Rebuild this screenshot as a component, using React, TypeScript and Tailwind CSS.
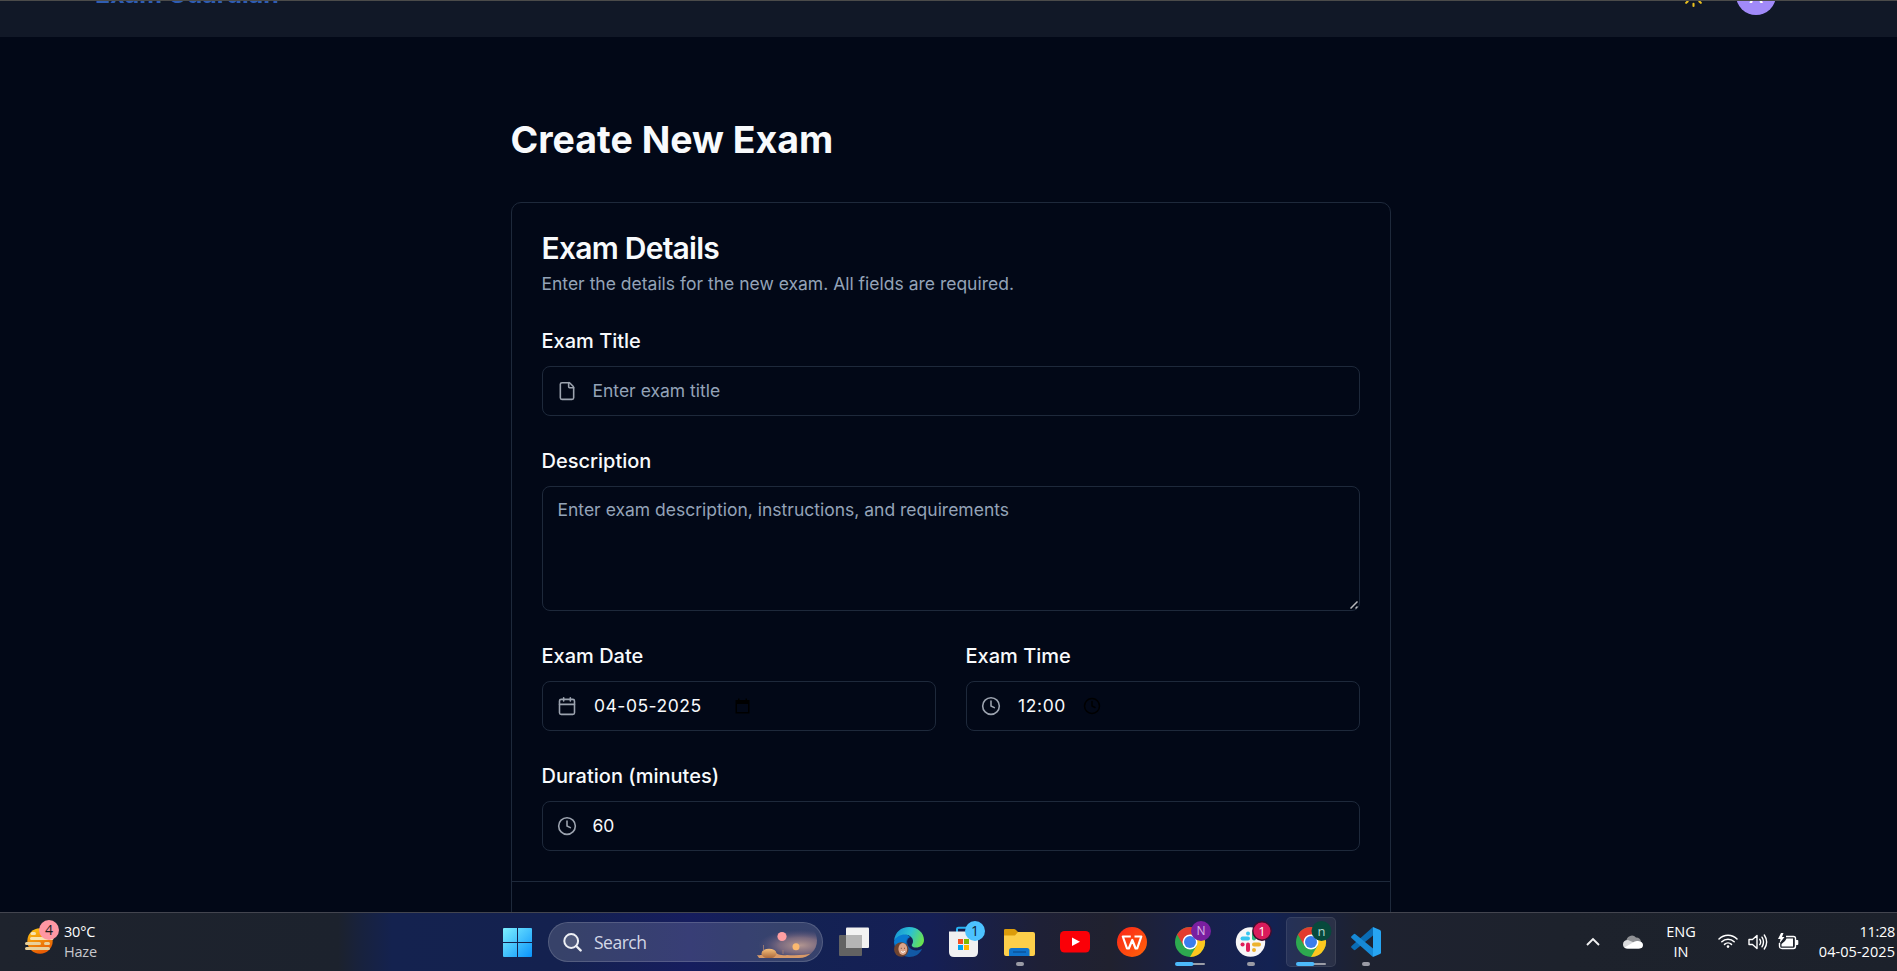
import React from "react";
import { Calendar, Clock, File, Sun } from "lucide-react";

const inter = "font-['Inter',sans-serif]";
const segoe = "font-['Open_Sans','Noto_Sans',sans-serif]";

function Label({ children }: { children: React.ReactNode }) {
  return <div className="-ml-[0.5px] h-5 text-[20px] leading-5 font-medium text-[#f8fafc]">{children}</div>;
}

function Field({
  label,
  icon,
  children,
  className = "",
}: {
  label: string;
  icon: React.ReactNode;
  children: React.ReactNode;
  className?: string;
}) {
  return (
    <div className={className}>
      <Label>{label}</Label>
      <div className="mt-[15px] flex h-[50px] items-center rounded-[8px] border border-[#1e293b] pl-[14px] text-[17.5px] leading-[25px]">
        {icon}
        {children}
      </div>
    </div>
  );
}

function Slot({
  children,
  className = "",
  active = false,
}: {
  children: React.ReactNode;
  className?: string;
  active?: boolean;
}) {
  return (
    <div
      className={
        (active ? "-mr-[10px] w-[50px] rounded-[5px] border border-white/8 bg-white/7 " : "w-[30px] ") +
        "flex h-[50px] shrink-0 items-center justify-center " +
        className
      }
    >
      <svg width="30" height="58" viewBox="0 0 30 58" className="shrink-0 overflow-visible">
        {children}
      </svg>
    </div>
  );
}

function Badge({ x, r = 10, fill, color, text, size = 12, ring }: {
  x: number; r?: number; fill: string; color: string; text: string; size?: number; ring?: string;
}) {
  return (
    <g>
      <circle cx={x} cy="18" r={r} fill={fill} stroke={ring} strokeWidth={ring ? 1.4 : 0} />
      <text x={x} y={18 + size * 0.36} textAnchor="middle" fontSize={size} fill={color} className={segoe}>
        {text}
      </text>
    </g>
  );
}

function Chrome() {
  return (
    <g transform="translate(0 14)">
      <circle cx="15" cy="15" r="15" fill="#2da94f" />
      <path d="M2 7.5A15 15 0 0 1 28 7.5H15L8.5 18.8Z" fill="#e33b2e" />
      <path d="M28 7.5A15 15 0 0 1 15 30L21.5 18.8L15 7.5Z" fill="#fdc71f" />
      <circle cx="15" cy="15" r="7.5" fill="#fff" />
      <circle cx="15" cy="15" r="6" fill="#3b7ded" />
    </g>
  );
}

function Running({ wide = false }: { wide?: boolean }) {
  return wide ? (
    <g>
      <rect x="10" y="50" width="20" height="2" rx="1" fill="#9a9ca6" />
      <rect x="0" y="49" width="18.500" height="4" rx="2" fill="#4cb9fb" />
    </g>
  ) : (
    <rect x="11" y="49" width="8" height="4" rx="2" fill="#9a9ba5" />
  );
}

function SearchArt() {
  return (
    <svg width="66" height="38" viewBox="0 0 66 38">
      <defs>
        <radialGradient id="glow" cx="0.62" cy="0.62" r="0.55">
          <stop offset="0" stopColor="#b39690" />
          <stop offset="0.5" stopColor="#8b7484" stopOpacity="0.8" />
          <stop offset="1" stopColor="#5f557c" stopOpacity="0" />
        </radialGradient>
        <linearGradient id="sand" x1="0" y1="0" x2="0" y2="1">
          <stop offset="0" stopColor="#f5bf7a" />
          <stop offset="1" stopColor="#a9673a" />
        </linearGradient>
        <clipPath id="artclip">
          <path d="M0 0H46A18 17.500 0 0 1 46 35H0Z" />
        </clipPath>
      </defs>
      <g clipPath="url(#artclip)">
        <ellipse cx="38" cy="19" rx="38" ry="14" fill="url(#glow)" />
        <path d="M4 32Q9 33 12 30Q16 26 22 29Q26 33 34 32Q48 33 62 30L56 35H6Z" fill="#d99a68" />
        <ellipse cx="16" cy="30.500" rx="7.500" ry="4.800" fill="url(#sand)" />
        <path d="M10.500 22V28M30 27V31" stroke="#a88274" strokeWidth="0.800" />
      </g>
      <circle cx="29" cy="13.500" r="4.600" fill="#ff9fa2" />
      <circle cx="43" cy="23.800" r="3.500" fill="#fbb96f" />
    </svg>
  );
}

function Taskbar() {
  return (
    <footer
      className={`${segoe} flex h-[59px] shrink-0 items-center border-t border-[#43454f] bg-[linear-gradient(90deg,#1e232d_0px,#1c222d_338px,#18223d_360px,#14224f_392px,#14214f_560px,#161d5e_690px,#132253_780px,#151f55_930px,#1e2036_1040px,#20212f_1110px,#17214c_1210px,#132252_1270px,#1e2230_1360px,#1d222c_1560px,#1c212b_1897px)]`}
    >
      <div className="flex w-[503px] shrink-0 items-center pl-[25px]">
        <svg width="39" height="50" viewBox="0 0 39 50" className="overflow-visible">
          <defs>
            <linearGradient id="sun" x1="0" y1="0" x2="0.400" y2="1">
              <stop offset="0" stopColor="#ffcb12" />
              <stop offset="1" stopColor="#e85d04" />
            </linearGradient>
          </defs>
          <circle cx="15" cy="24" r="12.700" fill="url(#sun)" />
          <g stroke="#f9e3ae" strokeWidth="3" strokeLinecap="round">
            <path d="M7 16.500H9.500M6.500 21.500H27" />
            <path d="M1.500 26.500H14.500M20.500 26.500H23.500M1.500 31.500H23.500" stroke="#e9d09a" />
          </g>
          <circle cx="24" cy="13" r="10" fill="#ff97a3" />
          <text x="24" y="17.800" textAnchor="middle" fontSize="14" fill="#1d1a1c">4</text>
        </svg>
        <div className="text-[14.500px] leading-[20px] tracking-[-0.200px]">
          <div className="text-white">30°C</div>
          <div className="text-[#c6c8cc]">Haze</div>
        </div>
      </div>

      <svg width="29" height="29" viewBox="0 0 29 29" className="shrink-0">
        <defs>
          <linearGradient id="win" x1="0" y1="0" x2="1" y2="1">
            <stop offset="0" stopColor="#7df0ff" />
            <stop offset="1" stopColor="#0a93fb" />
          </linearGradient>
        </defs>
        <path d="M1 0H14V14H0V1Q0 0 1 0ZM15 0H28Q29 0 29 1V14H15ZM0 15H14V29H1Q0 29 0 28ZM15 15H29V28Q29 29 28 29H15Z" fill="url(#win)" />
      </svg>

      <div className="ml-4 flex h-10 w-[275px] shrink-0 items-center justify-between rounded-full border border-white/15 bg-white/15 pl-[14px] pr-[3px]">
        <div className="flex items-center">
          <svg width="19" height="19" viewBox="0 0 19 19" fill="none" stroke="#eef0f5" strokeWidth="2" strokeLinecap="round">
            <circle cx="8.200" cy="8" r="6.900" fill="#ffffff22" />
            <path d="M13.200 13L17.600 17.400" strokeWidth="2.400" />
          </svg>
          <span className="ml-[12px] text-[17.500px] leading-6 tracking-[-0.5px] text-[#d3d7e6]">Search</span>
        </div>
        <SearchArt />
      </div>

      <Slot className="ml-[16px]">
        <rect x="0" y="22" width="23" height="21" rx="1" fill="#626262" />
        <rect x="7" y="14.500" width="23" height="20.500" rx="1" fill="#f2f2f2" />
        <path d="M7 22H23V35H8Q7 35 7 34Z" fill="#b5b5b5" />
      </Slot>

      <Slot className="ml-[25px]">
        <defs>
          <linearGradient id="edge1" x1="0" y1="0.300" x2="1" y2="0.600">
            <stop offset="0" stopColor="#1796d6" />
            <stop offset="0.5" stopColor="#2cc1d2" />
            <stop offset="1" stopColor="#6be34c" />
          </linearGradient>
        </defs>
        <path d="M0 29A15 15 0 0 0 15 44C21 44 26 41 28 36C22 39 15 37 13.500 31Q12 27 16 24Q8 18 0 29Z" fill="#1259a5" />
        <path d="M0 29C2 19 12 19 16 24C11 25 11 32 15 35C7 38 1 35 0 29Z" fill="#087bd2" />
        <path d="M0 28C1 19 7 14 15 14C24 14 30 20 30 27C30 32 26 34.500 22 34.500C18 34.500 17 32.500 18.300 31C21 26 16 21.500 11 21.500C6 21.500 2 24 0 28Z" fill="url(#edge1)" />
        <ellipse cx="7.300" cy="36.500" rx="7.200" ry="7.300" fill="#6f432f" />
        <ellipse cx="8.800" cy="36" rx="4.400" ry="6" fill="#dba58a" />
        <path d="M6.800 35.300H7.800M10 35.300H11" stroke="#5c3527" strokeWidth="0.800" />
        <path d="M7 38.500Q9 40.500 11 38.300" stroke="#fff" strokeWidth="1" fill="none" />
      </Slot>

      <Slot className="ml-[25px]">
        <path d="M8 20V16Q8 14.800 9.500 14.800H20" fill="none" stroke="#27b3f4" strokeWidth="2" />
        <path d="M0 18.500H29V39Q29 44 24 44H5Q0 44 0 39Z" fill="#f0f0f1" />
        <rect x="9" y="26" width="5" height="5" fill="#f25022" />
        <rect x="15" y="26" width="5" height="5" fill="#7fba00" />
        <rect x="9" y="32" width="5" height="5" fill="#00a4ef" />
        <rect x="15" y="32" width="5" height="5" fill="#ffb900" />
        <Badge x={26} fill="#4cc2ff" color="#0c2236" text="1" size={14} />
      </Slot>

      <Slot className="ml-[26px]">
        <path d="M-1 17Q-1 16 0.500 16H9Q10 16 11 17L13 19V26H-1Z" fill="#dc9c0b" />
        <path d="M-1 22.500H10L13 19H28Q30 19 30 21V41Q30 43 28 43H1Q-1 43 -1 41Z" fill="#fdcf4a" />
        <path d="M4 43V37.500Q4 35 6.500 35H22Q24.500 35 24.500 37.500V43Z" fill="#0f73cb" />
        <path d="M8 39H21" stroke="#0a4f94" strokeWidth="1.300" />
        <Running />
      </Slot>

      <Slot className="ml-[25px]">
        <rect x="0" y="18" width="30" height="21.500" rx="4.500" fill="#fb0007" />
        <path d="M12 24.500L20 28.700L12 33Z" fill="#fff" />
      </Slot>

      <Slot className="ml-[27px]">
        <defs>
          <linearGradient id="wps" x1="0" y1="0" x2="1" y2="1">
            <stop offset="0" stopColor="#fb2419" />
            <stop offset="1" stopColor="#ff6508" />
          </linearGradient>
        </defs>
        <circle cx="15" cy="29" r="15" fill="url(#wps)" />
        <path d="M13.800 23.500H5.800L10 35.500H11.800L15.300 27L18.600 35.500H20.200L24.300 23.500H17.500" fill="none" stroke="#fff" strokeWidth="2.200" strokeLinejoin="round" />
      </Slot>

      <Slot className="ml-[28px]">
        <Chrome />
        <Badge x={26} fill="#7a1fa0" color="#dcb9ea" text="N" size={12} />
        <Running wide />
      </Slot>

      <Slot className="ml-[31px]">
        <circle cx="14.500" cy="29" r="14.700" fill="#f7f6f7" />
        <g strokeWidth="4" strokeLinecap="round">
          <path d="M6.500 25.500H12" stroke="#36c5f0" />
          <path d="M12 20.500V20.600" stroke="#36c5f0" />
          <path d="M18 20V25.500" stroke="#2eb67d" />
          <path d="M18 31.500H23" stroke="#ecb22e" />
          <path d="M18 37V37.100" stroke="#ecb22e" />
          <path d="M12 31.500V37" stroke="#e01e5a" />
          <path d="M6.500 31.500H6.600" stroke="#e01e5a" />
        </g>
        <Badge x={26} r={9.2} fill="#d91b5b" color="#fff" text="1" size={13} ring="#3f0e2e" />
        <Running />
      </Slot>

      <Slot className="ml-[20px]" active>
        <Chrome />
        <Badge x={25.5} fill="#07493c" color="#b2d7cc" text="n" size={13} />
        <Running wide />
      </Slot>

      <Slot className="ml-[25px]">
        <path d="M22 14L29 17Q30 17.500 30 18.500V39.500Q30 40.500 29 41L22 44Z" fill="#27a5f2" />
        <path d="M22 14V22.500L4.500 36.800Q3.500 37.500 2.700 36.800L0.500 34.800Q-0.500 34 0.500 33Z" fill="#0a6cb4" />
        <path d="M22 44V35.500L4.500 21.200Q3.500 20.500 2.700 21.200L0.500 23.200Q-0.500 24 0.500 25Z" fill="#1689d6" />
        <Running />
      </Slot>

      <div className="ml-auto flex shrink-0 items-center pr-[2px] text-white">
        <svg width="14" height="9" viewBox="0 0 14 9" fill="none" stroke="#f1f1f2" strokeWidth="1.900" className="-mt-[2px]">
          <path d="M1 8L7 2L13 8" />
        </svg>
        <svg width="20" height="14" viewBox="0 0 20 14" className="ml-[23px]">
          <path d="M3.500 7A5.500 5.500 0 0 1 13 2.500A5 5 0 0 1 18 7L10 12Z" fill="#8e9094" />
          <path d="M0 9.500Q0 5 5 5L19 11Q18 13.500 15.500 13.500H4.500Q0 13.500 0 9.500Z" fill="#dadbdd" />
          <path d="M1.500 12.500L10 7.500Q12 5.500 15 6Q20 6.500 20 10Q20 13.500 16 13.500H4.500Q2.500 13.500 1.500 12.500Z" fill="#fff" />
        </svg>
        <div className="ml-[22px] w-[32px] text-center text-[14.500px] leading-[20px]">
          <div>ENG</div>
          <div>IN</div>
        </div>
        <svg width="20" height="16" viewBox="0 0 20 16" className="-mt-[2px] ml-[21px]" fill="none" stroke="#fff" strokeWidth="1.500" strokeLinecap="round">
          <path d="M1 6A12.500 12.500 0 0 1 19 6" />
          <path d="M3.800 8.800A8.800 8.800 0 0 1 16.200 8.800" />
          <path d="M6.500 11.400A5 5 0 0 1 13.500 11.400" />
          <circle cx="10" cy="13.600" r="1.300" fill="#fff" stroke="none" />
        </svg>
        <svg width="20" height="18" viewBox="0 0 20 18" className="ml-[10px]" fill="none" stroke="#fff" strokeWidth="1.400" strokeLinecap="round" strokeLinejoin="round">
          <path d="M1 6.500H4.500L9 2.500V15.500L4.500 11.500H1Z" />
          <path d="M11.800 6.300Q13.500 9 11.800 11.700M14 4.200Q17 9 14 13.800M16.300 2Q21 9 16.300 16" />
        </svg>
        <svg width="21" height="17" viewBox="0 0 21 17" className="-mt-[2px] ml-[10px]">
          <path d="M8 3.500H15.500Q17.500 3.500 17.500 5.500V13Q17.500 15.500 15.500 15.500H4Q1.500 15.500 1.500 13V10" fill="none" stroke="#fff" strokeWidth="1.400" />
          <path d="M8.500 5.500H15V13.500H3.500V11L7 8Z" fill="#fff" />
          <path d="M18 7H19.500Q20.300 7 20.300 8V11Q20.300 12 19.500 12H18Z" fill="#fff" />
          <path d="M3 0L0 6H2.500L1.500 10.500L6.500 4H4L5.500 0Z" fill="#fff" />
        </svg>
        <div className="ml-[17px] flex w-[79px] flex-col items-end text-[14.500px] leading-[20px] whitespace-nowrap">
          <div className="tracking-[-0.300px]">11:28</div>
          <div className="tracking-[0.050px]">04-05-2025</div>
        </div>
      </div>
    </footer>
  );
}

export default function App() {
  return (
    <div className={`${inter} flex h-[971px] w-[1897px] flex-col overflow-hidden bg-[#020817] text-[#f8fafc]`}>
      <header className="flex h-[37px] shrink-0 flex-col justify-end overflow-hidden border-t border-[#4b4b4a] bg-[#111827]">
        <div className="flex h-[84px] shrink-0 items-center justify-between pl-[95px] pr-[121px]">
          <div className="pb-[2px] text-[25px] leading-[35px] font-bold text-[#2f5db3]">Exam Guardian</div>
          <div className="flex items-center gap-[30px]">
            <Sun size={25} className="text-[#eac01f]" />
            <div className="flex h-10 w-10 items-center justify-center rounded-full bg-[#a18af9] pt-[1px] text-[20px] font-medium text-white">
              A
            </div>
          </div>
        </div>
      </header>

      <main className="flex min-h-0 grow flex-col overflow-hidden pl-[511px]">
        <h1 className="mt-[80px] -ml-[0.5px] h-[45px] shrink-0 text-[37.500px] leading-[45px] font-bold">Create New Exam</h1>
        <section className="mt-10 h-[760px] w-[880px] shrink-0 rounded-[10px] border border-[#1e293b]">
          <div className="px-[30px] pt-[30px] pb-[30px]">
            <h2 className="-ml-[0.5px] text-[30px] leading-[30px] font-semibold tracking-[-0.75px]">Exam Details</h2>
            <p className="mt-[8px] -ml-[0.5px] text-[17.500px] leading-[25px] text-[#94a3b8]">
              Enter the details for the new exam. All fields are required.
            </p>

            <Field
              className="mt-[35px]"
              label="Exam Title"
              icon={<File size={20} strokeWidth={1.9} className="text-[#9ca3af]" />}
            >
              <span className="ml-[15.500px] pb-[2px] text-[#94a3b8]">Enter exam title</span>
            </Field>

            <div className="mt-[35px]">
              <Label>Description</Label>
              <div className="relative mt-[15px] h-[125px] rounded-[8px] border border-[#1e293b] px-[14.500px] py-[10px] text-[17.500px] leading-[25px] text-[#94a3b8]">
                Enter exam description, instructions, and requirements
                <svg width="8" height="8" viewBox="0 0 8 8" className="absolute right-[1px] bottom-[1px]" stroke="#b9babd" strokeWidth="1.500">
                  <path d="M0.500 7.500L7.500 0.500M5.500 7.500L7.500 5.500" />
                </svg>
              </div>
            </div>

            <div className="mt-[35px] grid grid-cols-2 gap-[30px]">
              <Field label="Exam Date" icon={<Calendar size={20} strokeWidth={1.9} className="text-[#9ca3af]" />}>
                <span className="ml-[17px] w-[141px] pb-[2px] tracking-[0.500px]">04-05-2025</span>
                <svg width="15" height="16" viewBox="0 0 15 16">
                  <path d="M0.500 2H14.500V15.500H0.500ZM2 6V14H13V6Z" fill="#000" fillRule="evenodd" />
                  <path d="M3 0.500H4.500V2.500H3ZM10.500 0.500H12V2.500H10.500Z" fill="#000" />
                </svg>
              </Field>
              <Field label="Exam Time" icon={<Clock size={20} strokeWidth={1.9} className="text-[#9ca3af]" />}>
                <span className="ml-[17px] w-[65px] pb-[2px] tracking-[0.600px]">12:00</span>
                <Clock size={18} strokeWidth={2} className="text-black" />
              </Field>
            </div>

            <Field
              className="mt-[35px]"
              label="Duration (minutes)"
              icon={<Clock size={20} strokeWidth={1.9} className="text-[#9ca3af]" />}
            >
              <span className="ml-[15.500px] pb-[2px]">60</span>
            </Field>
          </div>
          <div className="border-t border-[#1e293b]" />
        </section>
      </main>

      <Taskbar />
    </div>
  );
}
